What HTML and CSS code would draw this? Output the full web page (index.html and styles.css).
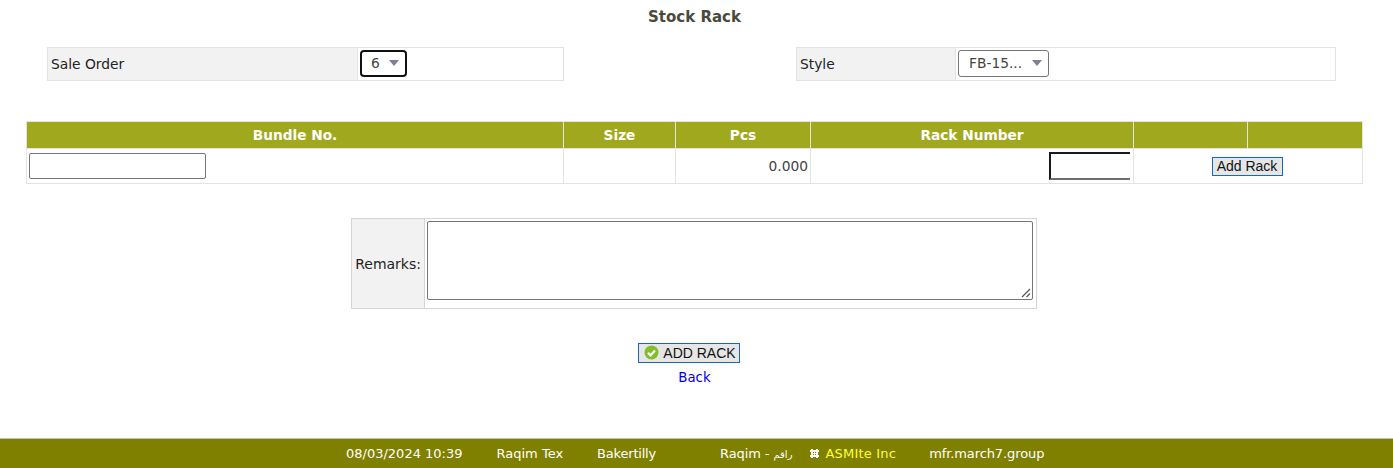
FILE: index.html
```html
<!DOCTYPE html>
<html lang="en">
<head>
<meta charset="utf-8">
<title>Stock Rack</title>
<link rel="stylesheet" href="styles.css">
</head>
<body>
<div class="page">
  <h1 class="title">Stock Rack</h1>
  <div class="filters">
    <table class="field field-order">
      <tr>
        <td class="label label-order">Sale Order</td>
        <td class="value"><div class="select select-focus"><span>6</span><i class="caret"></i></div></td>
      </tr>
    </table>
    <table class="field field-style">
      <tr>
        <td class="label label-style">Style</td>
        <td class="value"><div class="select"><span>FB-15...</span><i class="caret"></i></div></td>
      </tr>
    </table>
  </div>
  <table class="grid">
    <colgroup>
      <col class="c1"><col class="c2"><col class="c3"><col class="c4"><col class="c5"><col class="c6">
    </colgroup>
    <tr class="head">
      <th>Bundle No.</th><th>Size</th><th>Pcs</th><th>Rack Number</th><th></th><th></th>
    </tr>
    <tr class="row">
      <td class="cell-input"><div class="text-input"></div></td>
      <td></td>
      <td class="num">0.000</td>
      <td class="cell-rack"><div class="rack-input"></div></td>
      <td colspan="2" class="cell-btn"><button class="btn btn-small" type="button">Add Rack</button></td>
    </tr>
  </table>
  <table class="remarks">
    <tr>
      <td class="remarks-label">Remarks:</td>
      <td class="remarks-value">
        <div class="textarea">
          <svg class="grip" width="10" height="10" viewBox="0 0 10 10"><path d="M1 9 9 1M5.500 9 9 5.500" stroke="#555" stroke-width="1.200" fill="none"/></svg>
        </div>
      </td>
    </tr>
  </table>
  <div class="actions">
    <button class="btn btn-main" type="button">
      <svg class="check" width="15" height="15" viewBox="0 0 15 15"><circle cx="7.500" cy="7.500" r="7" fill="#84bd2a"/><path d="M4 7.800 6.500 10.300 11 5.500" stroke="#fff" stroke-width="2.200" fill="none"/></svg>ADD RACK
    </button>
    <a class="back" href="#">Back</a>
  </div>
</div>
<footer class="footer">
  <span class="f-date">08/03/2024 10:39</span>
  <span class="f-tex">Raqim Tex</span>
  <span class="f-baker">Bakertilly</span>
  <span class="f-raqim">Raqim - <span class="f-ar">راقم</span></span>
  <svg class="f-icon" width="9" height="9" viewBox="0 0 9 9"><path d="M1 0h2v1h3V0h2v1h1v2H8v3h1v2H8v1H6V8H3v1H1V8H0V6h1V3H0V1h1z" fill="#fff"/><path d="M3 3h1v1H3zM5 3h1v1H5zM3 5h1v1H3zM5 5h1v1H5z" fill="#808000"/></svg>
  <span class="f-asm">ASMIte Inc</span>
  <span class="f-mfr">mfr.march7.group</span>
</footer>
</body>
</html>
```
FILE: styles.css
```css
* { box-sizing: border-box; }
html, body { margin: 0; padding: 0; }
body {
  width: 1393px;
  height: 468px;
  background: #fff;
  color: #333;
  font-family: "DejaVu Sans", Verdana, sans-serif;
  font-size: 13.800px;
  overflow: hidden;
  display: flex;
  flex-direction: column;
}
.page { flex: 1; }
table { border-collapse: collapse; table-layout: fixed; }
td, th { padding: 0; }

.title {
  margin: 0;
  padding: 8px 4px 0 0;
  height: 47px;
  text-align: center;
  font-size: 15px;
  line-height: 18px;
  font-weight: bold;
  color: #4a4a3c;
}

.filters { display: flex; padding-left: 47px; }
.field { height: 34px; }
.field-order { width: 517px; }
.field-style { width: 540px; margin-left: 232px; }
.field td { border: 1px solid #e3e3e3; }
.label { background: #f2f2f2; padding: 0 0 0 3px; color: #222; }
.label-order { width: 310px; }
.label-style { width: 159px; }
.value { padding: 0 0 2px 2px; }
.select {
  display: inline-flex;
  align-items: center;
  height: 27px;
  padding: 0 6px 0 10px;
  gap: 10px;
  border: 1px solid #767676;
  border-radius: 3px;
  color: #444;
  vertical-align: middle;
}
.select-focus { border: 2px solid #111; padding: 0 6px 0 9px; border-radius: 4px; gap: 9px; }
.caret {
  width: 0;
  height: 0;
  border-left: 5px solid transparent;
  border-right: 5px solid transparent;
  border-top: 6px solid #7f7f95;
}

.grid {
  width: 1337px;
  margin: 40px 0 0 26px;
}
.c1 { width: 537px; }
.c2 { width: 112px; }
.c3 { width: 135px; }
.c4 { width: 323px; }
.c5 { width: 114px; }
.c6 { width: 115px; }
.head th {
  height: 27px;
  background: #a0a91d;
  color: #fff;
  font-size: 13.700px;
  font-weight: bold;
  border: 1px solid #e3e3e3;
}
.row td { height: 35px; border: 1px solid #e3e3e3; }
.cell-input { padding-left: 2px; }
.text-input {
  width: 177px;
  height: 26px;
  border: 1px solid #767676;
  border-radius: 2px;
}
.num { text-align: right; padding-right: 2px; color: #444; }
.row .cell-rack { padding: 0; overflow: hidden; }
.rack-input {
  width: 81px;
  height: 28px;
  margin-left: 238px;
  border-top: 2px solid #1a1a1a;
  border-left: 2px solid #1a1a1a;
  border-bottom: 2px solid #6e6e6e;
}
.cell-btn { text-align: center; }
.btn {
  font-family: "Liberation Sans", Arial, sans-serif;
  font-size: 14px;
  color: #111;
  background: #e6e6e6;
  border: 1px solid #1068c8;
  padding: 0;
  margin: 0;
  vertical-align: middle;
}
.btn-small { width: 71px; height: 19px; line-height: 16px; margin-right: 2px; }

.remarks {
  width: 686px;
  height: 91px;
  margin: 34px 0 0 351px;
}
.remarks td { border: 1px solid #d4d4d4; }
.remarks-label {
  width: 73px;
  background: #f2f2f2;
  text-align: right;
  padding-right: 3px;
  color: #222;
  font-size: 14px;
}
.remarks .remarks-value { padding: 2px; border-left-color: #e3e3e3; vertical-align: top; }
.textarea {
  position: relative;
  height: 79px;
  width: 606px;
  border: 1px solid #767676;
  border-radius: 2px;
}
.grip { position: absolute; right: 1px; bottom: 1px; }

.actions {
  display: flex;
  flex-direction: column;
  align-items: center;
  margin-top: 34px;
  padding-right: 4px;
}
.btn-main {
  display: flex;
  align-items: center;
  justify-content: center;
  gap: 4px;
  width: 102px;
  height: 20px;
  line-height: 18px;
  padding: 0 0 1px 3px;
  margin-right: 12px;
}
.check { flex: none; }
.back {
  color: #0000e6;
  text-decoration: none;
  line-height: 16px;
  margin-top: 7px;
  font-size: 13.300px;
}

.footer {
  height: 30px;
  flex: none;
  display: flex;
  align-items: center;
  padding-left: 346px;
  background: #808000;
  border-top: 1px solid #bdbdbd;
  color: #fff;
  font-size: 13px;
  white-space: nowrap;
}
.f-tex { margin-left: 34px; }
.f-baker { margin-left: 34px; letter-spacing: -.2px; }
.f-raqim { margin-left: 64px; letter-spacing: -.1px; }
.f-ar { font-size: 10px; }
.f-icon { margin-left: 18px; flex: none; }
.f-asm { margin-left: 6px; color: #ffff33; letter-spacing: .2px; }
.f-mfr { margin-left: 33px; letter-spacing: -.1px; }
```
